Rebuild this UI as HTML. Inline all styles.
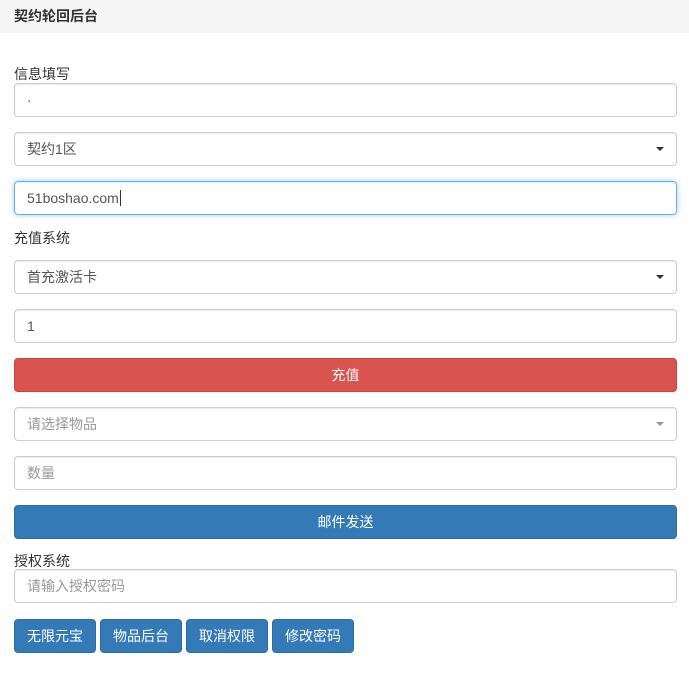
<!DOCTYPE html>
<html><head><meta charset="utf-8"><style>
*{box-sizing:border-box;margin:0;padding:0}
body{width:689px;height:680px;background:#fff;font-family:"Liberation Sans","Noto Sans CJK SC",sans-serif;font-size:14px;color:#333;position:relative;overflow:hidden}
.hd{position:absolute;left:0;top:0;width:689px;height:33px;background:#f5f5f5;font-weight:bold;font-size:14px;line-height:33px;padding-left:14px;color:#333}
.lb{position:absolute;left:14px;font-size:14px;line-height:16px}
.in{position:absolute;left:14px;width:663px;height:34px;border:1px solid #ccc;border-radius:4px;padding:0 12px;line-height:32px;color:#555;box-shadow:inset 0 1px 1px rgba(0,0,0,.075)}
.in.ph{color:#999}
.in.fo{border-color:#66afe9;box-shadow:inset 0 1px 1px rgba(0,0,0,.075),0 0 6px rgba(102,175,233,.6)}
.car{position:absolute;right:12px;top:14px;width:0;height:0;border-left:4px solid transparent;border-right:4px solid transparent;border-top:4px solid #333}
.car.l{border-top-color:#999}
.bt{position:absolute;height:34px;border-radius:4px;color:#fff;text-align:center;line-height:32px;font-size:14px}
.red{background:#d9534f;border:1px solid #d43f3a}
.blue{background:#337ab7;border:1px solid #2e6da4}
</style></head><body>
<div class="hd">契约轮回后台</div>
<div class="lb" style="top:66px">信息填写</div>
<div class="in" style="top:83px">·</div>
<div class="in" style="top:132px">契约1区<span class="car"></span></div>
<div class="in fo" style="top:181px">51boshao.com<span style="border-left:1px solid #333;margin-left:1px"></span></div>
<div class="lb" style="top:230px">充值系统</div>
<div class="in" style="top:260px">首充激活卡<span class="car"></span></div>
<div class="in" style="top:309px">1</div>
<div class="bt red" style="top:358px;left:14px;width:663px">充值</div>
<div class="in ph" style="top:407px">请选择物品<span class="car l"></span></div>
<div class="in ph" style="top:456px">数量</div>
<div class="bt blue" style="top:505px;left:14px;width:663px">邮件发送</div>
<div class="lb" style="top:553px">授权系统</div>
<div class="in ph" style="top:569px">请输入授权密码</div>
<div class="bt blue" style="top:619px;left:14px;width:82px">无限元宝</div>
<div class="bt blue" style="top:619px;left:100px;width:82px">物品后台</div>
<div class="bt blue" style="top:619px;left:186px;width:82px">取消权限</div>
<div class="bt blue" style="top:619px;left:272px;width:82px">修改密码</div>
</body></html>
